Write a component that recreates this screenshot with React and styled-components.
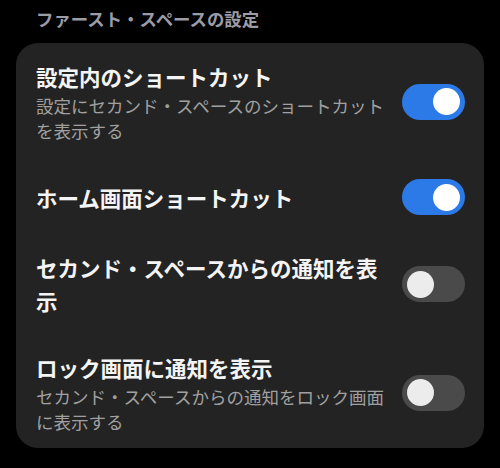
import React, { useState } from 'react';
import styled, { createGlobalStyle } from 'styled-components';

const GlobalStyle = createGlobalStyle`
  html, body {
    margin: 0;
    padding: 0;
    background: #000;
  }
  body {
    font-family: "Noto Sans CJK JP", "Noto Sans", sans-serif;
    -webkit-font-smoothing: antialiased;
  }
`;

const Page = styled.div`
  width: 500px;
  height: 468px;
  background: #000;
  box-sizing: border-box;
  padding: 4px 16px 0;
  overflow: hidden;
`;

const SectionTitle = styled.h2`
  margin: 0 0 10px 20px;
  font-size: 17.4px;
  line-height: 29px;
  font-weight: 700;
  color: #9c9ca6;
`;

const Card = styled.div`
  background: #232323;
  border-radius: 22px;
  padding: 0 19px 0 20px;
`;

const Row = styled.div`
  display: flex;
  align-items: center;
  gap: 14px;
  padding: 17px 0;

  &:last-child {
    padding-bottom: 14px;
  }
`;

const TextBlock = styled.div`
  flex: 1;
  min-width: 0;
  max-width: 353px;
`;

const Title = styled.div`
  font-size: 21.5px;
  line-height: 33px;
  font-weight: 700;
  color: #f4f4f4;
`;

const Subtitle = styled.div`
  font-size: 17.5px;
  line-height: 25px;
  color: #a0a0a0;
`;

const Track = styled.button`
  flex: none;
  position: relative;
  width: 63px;
  height: 36px;
  margin: 2px 0 2px auto;
  padding: 0;
  border: none;
  border-radius: 18px;
  cursor: pointer;
  background: ${p => (p.$on ? '#2b7ae8' : '#4a4a4a')};
`;

const Knob = styled.span`
  position: absolute;
  top: 4.5px;
  left: ${p => (p.$on ? '31px' : '5px')};
  width: 27px;
  height: 27px;
  border-radius: 50%;
  background: ${p => (p.$on ? '#ffffff' : '#ececec')};
`;

const Toggle = ({ on, onChange }) => (
  <Track $on={on} onClick={onChange} aria-pressed={on}>
    <Knob $on={on} />
  </Track>
);

const items = [
  {
    title: '設定内のショートカット',
    sub: '設定にセカンド・スペースのショートカットを表示する',
    on: true,
  },
  { title: 'ホーム画面ショートカット', on: true },
  { title: 'セカンド・スペースからの通知を表示', on: false },
  {
    title: 'ロック画面に通知を表示',
    sub: 'セカンド・スペースからの通知をロック画面に表示する',
    on: false,
  },
];

export default function App() {
  const [state, setState] = useState(items.map(i => i.on));

  const flip = idx => setState(s => s.map((v, i) => (i === idx ? !v : v)));

  return (
    <Page>
      <GlobalStyle />
      <SectionTitle>ファースト・スペースの設定</SectionTitle>
      <Card>
        {items.map((item, idx) => (
          <Row key={item.title}>
            <TextBlock>
              <Title>{item.title}</Title>
              {item.sub && <Subtitle>{item.sub}</Subtitle>}
            </TextBlock>
            <Toggle on={state[idx]} onChange={() => flip(idx)} />
          </Row>
        ))}
      </Card>
    </Page>
  );
}
